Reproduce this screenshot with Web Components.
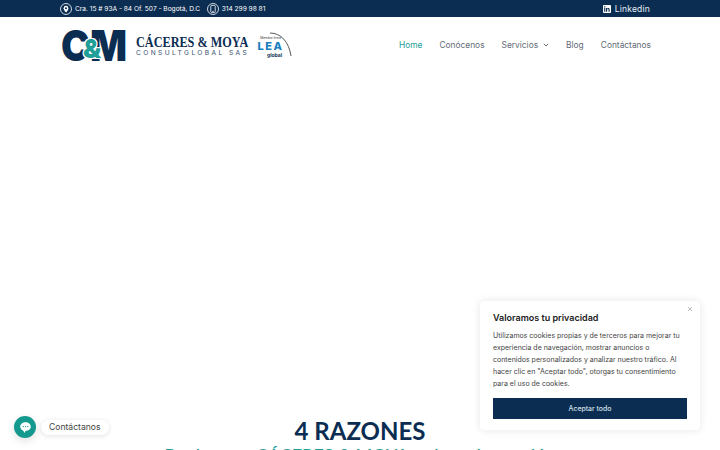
<!DOCTYPE html>
<html lang="es">
<head>
<meta charset="utf-8">
<title>Cáceres & Moya</title>
<style>
    html, body { margin: 0; height: 450px; overflow: hidden; background: #fff; }
    body { position: relative; font-family: Inter, "Liberation Sans", sans-serif; }
</style>
</head>
<body>
<top-bar></top-bar>
<site-header></site-header>
<reasons-intro></reasons-intro>
<cookie-box></cookie-box>
<chat-launcher></chat-launcher>

<script>
class TopBar extends HTMLElement {
    constructor() {
        super();
        this.root = this.attachShadow({ mode: "open" });
    }
    connectedCallback() {
        this.root.innerHTML = `
        <style>
            :host {
                display: flex;
                justify-content: space-between;
                align-items: center;
                height: 17px;
                padding: 0 70px 0 60px;
                background: #0b2d52;
                color: #fff;
                font-size: 6.6px;
            }
            .left, .item, .link { display: flex; align-items: center; }
            .item { gap: 3px; margin-right: 6.5px; }
            .link { gap: 4px; font-size: 8.5px; letter-spacing: .2px; color: #e6edf3; }
            svg { display: block; }
        </style>
        <div class="left">
            <div class="item">
                <svg width="12" height="12" viewBox="0 0 12 12" fill="none" stroke="#fff">
                    <circle cx="6" cy="6" r="5.5" stroke-width=".8"/>
                    <path d="M6 9.6C4.6 7.9 3.6 6.6 3.6 5.2a2.4 2.4 0 0 1 4.8 0C8.4 6.6 7.4 7.9 6 9.6z" fill="#fff" stroke="none"/>
                    <circle cx="6" cy="5.2" r="1" fill="#0b2d52" stroke="none"/>
                </svg>
                <span>Cra. 15 # 93A - 84 Of. 507 - Bogotá, D.C</span>
            </div>
            <div class="item">
                <svg width="12" height="12" viewBox="0 0 12 12" fill="none" stroke="#fff" stroke-width=".8">
                    <circle cx="6" cy="6" r="5.5"/>
                    <rect x="3.8" y="2.4" width="4.4" height="7.2" rx=".8"/>
                    <path d="M5.2 8.4h1.6"/>
                </svg>
                <span>314 299 98 81</span>
            </div>
        </div>
        <div class="link">
            <svg width="8" height="8" viewBox="0 0 9 9">
                <rect width="9" height="9" rx="1" fill="#fff"/>
                <path d="M1.3 3.5h1.3v4H1.3zM1.3 1.5h1.3v1.2H1.3zM3.4 3.5h1.2v.6c.3-.4.7-.7 1.3-.7 1 0 1.6.6 1.6 1.8v2.3H6.2V5.4c0-.6-.2-.9-.7-.9s-.8.3-.8.9v2.1H3.4z" fill="#0b2d52"/>
            </svg>
            <span>Linkedin</span>
        </div>
        `;
    }
}

class BrandLogo extends HTMLElement {
    constructor() {
        super();
        this.root = this.attachShadow({ mode: "open" });
    }
    connectedCallback() {
        this.root.innerHTML = `
        <style>
            :host { display: flex; align-items: center; color: #0b2d52; }
            .mark {
                display: grid;
                width: 68px;
                height: 36px;
                font: 900 43px/36px Inter, sans-serif;
            }
            .mark span { grid-area: 1 / 1; }
            .c { justify-self: start; transform: scaleX(.9); transform-origin: left center; margin-left: 1px; }
            .m { justify-self: end; transform: scaleX(.9); transform-origin: right center; margin-right: 1px; }
            .amp {
                z-index: 1;
                justify-self: start;
                align-self: end;
                margin: 0 0 3px 23px;
                font: 900 26px/22px Inter, sans-serif;
                color: #1f9f98;
                text-shadow: 1px 0 #fff, -1px 0 #fff, 0 1px #fff, 0 -1px #fff, 1px 1px #fff, -1px -1px #fff, 1px -1px #fff, -1px 1px #fff;
            }
            .name { margin: 0 0 0 8px; width: 112px; }
            .name b {
                display: block;
                margin-top: 2px;
                font: 700 15px/13px "Liberation Serif", serif;
                white-space: nowrap;
                transform: scaleX(.815);
                transform-origin: left center;
            }
            .name span {
                display: block;
                margin-top: 1px;
                font: 400 6.6px/7px Inter, sans-serif;
                letter-spacing: 2.42px;
                white-space: nowrap;
                color: #33506f;
            }
            .lea {
                display: grid;
                width: 36px;
                height: 30px;
                margin-left: 9px;
            }
            .lea > * { grid-area: 1 / 1; }
            .stack { display: flex; flex-direction: column; align-items: center; width: 27px; padding-top: 6px; }
            .lea small { font: 400 3px/4px Inter, sans-serif; color: #333; white-space: nowrap; }
            .lea strong { margin-top: 1px; font: 800 11px/11px Inter, sans-serif; color: #1b7fc0; letter-spacing: 1.6px; }
            .lea em { font: 700 5px/6px Inter, sans-serif; font-style: normal; color: #0b2d52; padding-left: 8px; }
        </style>
        <div class="mark"><span class="c">C</span><span class="m">M</span><span class="amp">&amp;</span></div>
        <div class="name"><b>CÁCERES &amp; MOYA</b><span>CONSULTGLOBAL SAS</span></div>
        <div class="lea">
            <div class="stack">
                <small>Miembro firma</small>
                <strong>LEA</strong>
                <em>global</em>
            </div>
            <svg width="36" height="30" viewBox="0 0 36 30" fill="none"><path d="M13 3c11 0 19 9 21 23" stroke="#444" stroke-width=".9"/></svg>
        </div>
        `;
    }
}

class SiteHeader extends HTMLElement {
    constructor() {
        super();
        this.root = this.attachShadow({ mode: "open" });
    }
    connectedCallback() {
        this.root.innerHTML = `
        <style>
            :host {
                display: flex;
                justify-content: space-between;
                align-items: center;
                height: 56px;
                padding: 0 69px 0 60px;
                background: #fff;
            }
            nav { display: flex; gap: 17px; font-size: 8.4px; color: #646c78; }
            nav a { display: flex; align-items: center; gap: 5px; }
            nav a.current { color: #1f9f98; }
        </style>
        <brand-logo></brand-logo>
        <nav>
            <a class="current">Home</a>
            <a>Conócenos</a>
            <a>Servicios
                <svg width="6" height="4" viewBox="0 0 6 4" fill="none" stroke="#646c78"><path d="M.8.8 3 3 5.2.8"/></svg>
            </a>
            <a>Blog</a>
            <a>Contáctanos</a>
        </nav>
        `;
    }
}

class ReasonsIntro extends HTMLElement {
    constructor() {
        super();
        this.root = this.attachShadow({ mode: "open" });
    }
    connectedCallback() {
        this.root.innerHTML = `
        <style>
            :host {
                display: block;
                padding-top: 344px;
                text-align: center;
            }
            h2 {
                margin: 0;
                font: 700 24px/28px Lato, sans-serif;
                color: #0b2d52;
            }
            p {
                margin: -1px 0 0;
                font: 500 18px/22px Lato, sans-serif;
                color: #1f9f98;
                white-space: nowrap;
            }
        </style>
        <h2>4 RAZONES</h2>
        <p>Por las que CÁCERES &amp; MOYA es la mejor opción</p>
        `;
    }
}

class CookieBox extends HTMLElement {
    constructor() {
        super();
        this.root = this.attachShadow({ mode: "open" });
    }
    connectedCallback() {
        this.root.innerHTML = `
        <style>
            :host {
                position: absolute;
                left: 480px;
                top: 301px;
                width: 220px;
                height: 129px;
                box-sizing: border-box;
                padding: 11px 13px;
                background: #fff;
                border-radius: 4px;
                box-shadow: 0 0 8px rgba(0, 0, 0, .1);
                color: #333;
            }
            h3 { margin: 0 0 6px; font-size: 9px; line-height: 12px; font-weight: 600; color: #212121; }
            p { margin: 0 0 8px; font-size: 7px; line-height: 12px; color: #444; white-space: nowrap; }
            button {
                display: block;
                width: 100%;
                height: 21px;
                padding: 0;
                border: 0;
                background: #0b2d52;
                color: #d5e0ea;
                font: 500 6.9px Inter, sans-serif;
            }
            .close { position: absolute; right: 7px; top: 5px; }
        </style>
        <svg class="close" width="6" height="6" viewBox="0 0 6 6" stroke="#aaa" stroke-width=".8"><path d="M1 1l4 4M5 1L1 5"/></svg>
        <h3>Valoramos tu privacidad</h3>
        <p>Utilizamos cookies propias y de terceros para mejorar tu<br>experiencia de navegación, mostrar anuncios o<br>contenidos personalizados y analizar nuestro tráfico. Al<br>hacer clic en "Aceptar todo", otorgas tu consentimiento<br>para el uso de cookies.</p>
        <button>Aceptar todo</button>
        `;
    }
}

class ChatLauncher extends HTMLElement {
    constructor() {
        super();
        this.root = this.attachShadow({ mode: "open" });
    }
    connectedCallback() {
        this.root.innerHTML = `
        <style>
            :host {
                position: absolute;
                left: 14px;
                top: 416px;
                display: flex;
                align-items: center;
                gap: 5px;
            }
            .btn {
                display: flex;
                align-items: center;
                justify-content: center;
                width: 22px;
                height: 22px;
                border-radius: 50%;
                background: #14998f;
                box-shadow: 0 3px 8px rgba(0, 0, 0, .12);
            }
            .label {
                padding: 2px 8px;
                font-size: 8.6px;
                line-height: 11px;
                color: #444;
                background: #fff;
                border-radius: 8px;
                box-shadow: 0 1px 5px rgba(0, 0, 0, .12);
            }
        </style>
        <div class="btn">
            <svg width="13" height="13" viewBox="0 0 13 13">
                <path d="M6.5 1.2c3 0 5.3 1.9 5.3 4.4s-2.3 4.4-5.3 4.4l-.7 2-1.6-2.3C2.5 9.1 1.2 7.5 1.2 5.6c0-2.5 2.3-4.4 5.3-4.4z" fill="#fff"/>
                <circle cx="4.2" cy="5.6" r=".7" fill="#14998f"/><circle cx="6.5" cy="5.6" r=".7" fill="#14998f"/><circle cx="8.8" cy="5.6" r=".7" fill="#14998f"/>
            </svg>
        </div>
        <div class="label">Contáctanos</div>
        `;
    }
}

customElements.define("top-bar", TopBar);
customElements.define("brand-logo", BrandLogo);
customElements.define("site-header", SiteHeader);
customElements.define("reasons-intro", ReasonsIntro);
customElements.define("cookie-box", CookieBox);
customElements.define("chat-launcher", ChatLauncher);
</script>
</body>
</html>
